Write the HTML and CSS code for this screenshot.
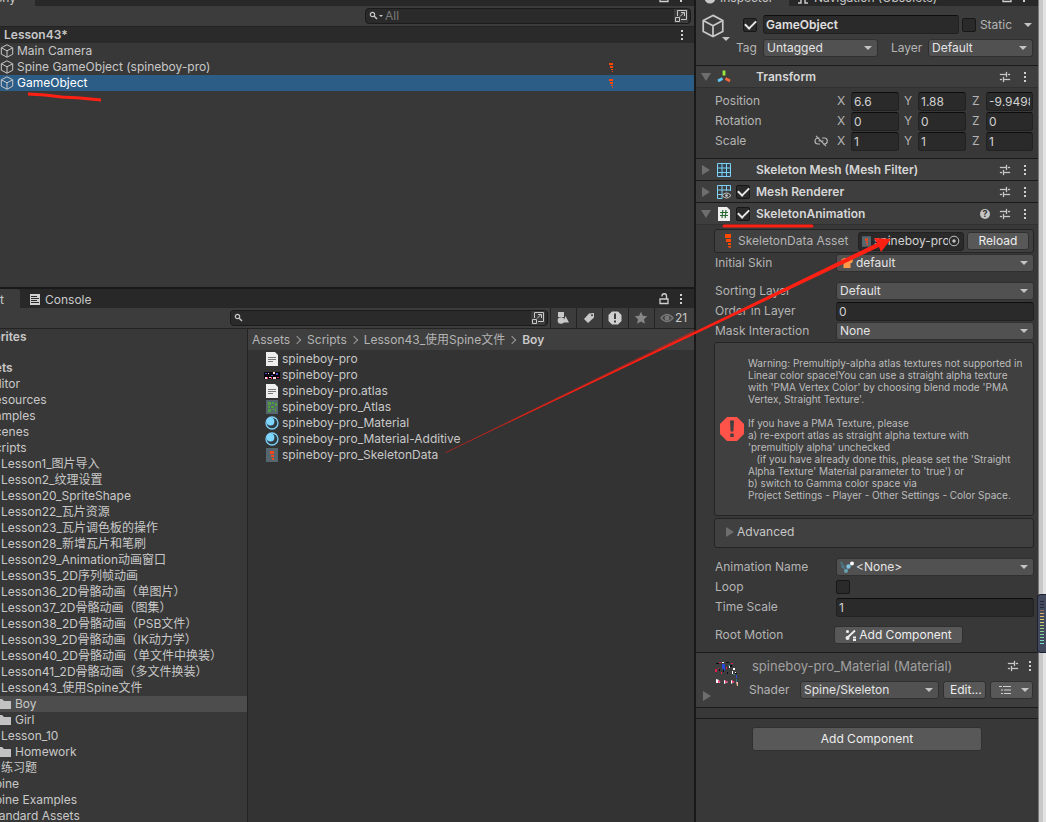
FILE: index.html
```html
<!DOCTYPE html>
<html lang="en">
<head>
    <meta charset="UTF-8">
    <meta name="viewport" content="width=device-width, initial-scale=1.0">
    <title>Lesson43 - Editor</title>
    <link rel="stylesheet" href="styles.css">
</head>
<body>
    <!-- shared icons -->
    <svg class="sprite" aria-hidden="true">
        <symbol id="cube" viewBox="0 0 14 14"><path d="M7 .8 12.700 3.800V10.200L7 13.200 1.300 10.200V3.800ZM1.300 3.800 7 6.800 12.700 3.800M7 6.800V13.200" fill="none" stroke="currentColor" stroke-width="1"/></symbol>
        <symbol id="dots" viewBox="0 0 4 12"><path d="M1 1h2v2H1zM1 5h2v2H1zM1 9h2v2H1z" fill="currentColor"/></symbol>
        <symbol id="preset" viewBox="0 0 12 12"><path d="M1 3h6v1H1zM9 3h2v1H9zM7 1h1v5H7zM1 8h2v1H1zM5 8h6v1H5zM4 6h1v5H4z" fill="#c8c8c8" stroke="#c8c8c8" stroke-width=".3"/></symbol>
        <symbol id="search" viewBox="0 0 10 10"><circle cx="3.500" cy="3.500" r="2.200" fill="none" stroke="currentColor" stroke-width="1.200"/><path d="M5 5l3 3" stroke="currentColor" stroke-width="1.400"/></symbol>
        <symbol id="popout" viewBox="0 0 14 14"><path d="M3.500 7V1.500h9v9H7M1.500 8.500h4v4h-4zM6 7.500l4-4M7 3.500h3.500V7" fill="none" stroke="currentColor" stroke-width="1"/></symbol>
        <symbol id="spine" viewBox="0 0 8 16"><path d="M1 1h6v4H1zM2 6h5v3H2zM4 10h3v2H4zM4 13h3v1l-1 1H5z" fill="#ff4800"/></symbol>
        <symbol id="spine-small" viewBox="0 0 5 11"><path d="M0 1h4v2H0zM1 4h3v2H1zM2 7h2v1H2zM3 9h1v1H3z" fill="#ff4800"/></symbol>
        <symbol id="lock" viewBox="0 0 12 12"><path d="M2 6h8v4.500H2zM4 3.500V3a2 2 0 0 1 4.500 0v3" fill="none" stroke="currentColor" stroke-width="1.300"/></symbol>
        <symbol id="file" viewBox="0 0 14 14"><path d="M1 0h9l3 3v11H1z" fill="#eee"/><path d="M3 5.500h8M3 7.500h8M3 9.500h5" stroke="#777"/></symbol>
        <symbol id="material" viewBox="0 0 14 14"><circle cx="7" cy="7" r="6" fill="#2e3c44" stroke="#7fd0f7" stroke-width="1.300"/><circle cx="5.500" cy="5.500" r="3.900" fill="#7fd6fd"/></symbol>
        <symbol id="folder" viewBox="0 0 14 12"><path d="M0 1h5l2 2h7v8H0z" fill="#c2c2c2"/></symbol>
        <symbol id="bone" viewBox="0 0 12 14"><path d="M0 0h12v14H0z" fill="#56666f"/><path d="M4 3h4v3H4zM5 7h3v2H5zM6 10h2v2H6z" fill="#f2481c"/></symbol>
    </svg>

    <div class="editor">
        <main class="left">
            <section class="hierarchy">
                <div class="tabs clipped-tabs">
                    <div class="tab active hierarchy-tab">Hierarchy</div>
                    <div class="tab-tools">
                        <svg class="i-lock"><use href="#lock"/></svg>
                        <svg class="i-dots"><use href="#dots"/></svg>
                    </div>
                </div>
                <div class="toolbar">
                    <label class="search hierarchy-search">
                        <svg class="i-search"><use href="#search"/></svg>
                        <span class="tiny-caret"></span>
                        <input type="search" placeholder="All" aria-label="Search hierarchy">
                        <svg class="i-popout"><use href="#popout"/></svg>
                    </label>
                </div>
                <div class="scene">
                    <strong>Lesson43*</strong>
                    <svg class="i-dots"><use href="#dots"/></svg>
                </div>
                <ul class="objects">
                    <li><svg class="i-cube"><use href="#cube"/></svg><span>Main Camera</span></li>
                    <li><svg class="i-cube"><use href="#cube"/></svg><span>Spine GameObject (spineboy-pro)</span><svg class="i-spine-small"><use href="#spine-small"/></svg></li>
                    <li class="selected"><svg class="i-cube"><use href="#cube"/></svg><span>GameObject</span><svg class="i-spine-small"><use href="#spine-small"/></svg></li>
                </ul>
            </section>

            <section class="project">
                <div class="tabs">
                    <div class="tab active project-tab">Project</div>
                    <div class="tab console-tab">
                        <svg class="i-console" viewBox="0 0 10 11"><path d="M0 0h10v11H0z" fill="#d2d2d2"/><path d="M1 2.500h6M1 4.500h8M1 6.500h6M1 8.500h8" stroke="#282828"/></svg>
                        Console
                    </div>
                    <div class="tab-tools">
                        <svg class="i-lock"><use href="#lock"/></svg>
                        <svg class="i-dots"><use href="#dots"/></svg>
                    </div>
                </div>
                <div class="toolbar project-toolbar">
                    <label class="search project-search">
                        <svg class="i-search"><use href="#search"/></svg>
                        <input type="search" aria-label="Search project">
                        <svg class="i-popout"><use href="#popout"/></svg>
                    </label>
                    <button class="tool" aria-label="Search by type"><svg class="i-tool" viewBox="0 0 14 14"><path d="M2 1h6v5H2zM9.500 5 13 11.500H7z" fill="#c8c8c8"/><circle cx="5" cy="9.500" r="3.300" fill="#c8c8c8"/></svg></button>
                    <button class="tool" aria-label="Search by label"><svg class="i-tool" viewBox="0 0 14 14"><path d="M7 2.500 12 2v4.500L6 12 2 8z" fill="#c8c8c8"/><circle cx="10" cy="4.300" r="1" fill="#3c3c3c"/></svg></button>
                    <button class="tool" aria-label="Search by import log"><svg class="i-tool" viewBox="0 0 14 14"><path d="M4 .5h6L13.500 4v6L10 13.500H4L.5 10V4z" fill="#d0d0d0"/><path d="M6 2.500h2V8H6zM6 9.500h2v2H6z" fill="#3c3c3c"/></svg></button>
                    <button class="tool" aria-label="Save search"><svg class="i-tool" viewBox="0 0 14 14"><path d="m7 .8 1.900 4 4.300.5-3.200 3 .9 4.400L7 10.500l-3.900 2.200.9-4.400-3.200-3 4.300-.5z" fill="#868686"/></svg></button>
                    <button class="tool hidden-count"><svg class="i-eye" viewBox="0 0 14 10"><path d="M1 5q6-7 12 0-6 7-12 0z" fill="none" stroke="#777" stroke-width="1.300"/><circle cx="7" cy="5" r="2.500" fill="#777"/></svg>21</button>
                </div>
                <div class="browser">
                    <ul class="tree">
                        <li class="root favorites">Favorites</li>
                        <li class="root">Assets</li>
                        <li>Editor</li>
                        <li>Resources</li>
                        <li>Samples</li>
                        <li>Scenes</li>
                        <li>Scripts</li>
                        <li class="level2">Lesson1_图片导入</li>
                        <li class="level2">Lesson2_纹理设置</li>
                        <li class="level2">Lesson20_SpriteShape</li>
                        <li class="level2">Lesson22_瓦片资源</li>
                        <li class="level2">Lesson23_瓦片调色板的操作</li>
                        <li class="level2">Lesson28_新增瓦片和笔刷</li>
                        <li class="level2">Lesson29_Animation动画窗口</li>
                        <li class="level2">Lesson35_2D序列帧动画</li>
                        <li class="level2">Lesson36_2D骨骼动画（单图片）</li>
                        <li class="level2">Lesson37_2D骨骼动画（图集）</li>
                        <li class="level2">Lesson38_2D骨骼动画（PSB文件）</li>
                        <li class="level2">Lesson39_2D骨骼动画（IK动力学）</li>
                        <li class="level2">Lesson40_2D骨骼动画（单文件中换装）</li>
                        <li class="level2">Lesson41_2D骨骼动画（多文件换装）</li>
                        <li class="level2">Lesson43_使用Spine文件</li>
                        <li class="level3 current"><svg class="i-folder"><use href="#folder"/></svg>Boy</li>
                        <li class="level3"><svg class="i-folder"><use href="#folder"/></svg>Girl</li>
                        <li class="level2">Lesson_10</li>
                        <li class="level3"><svg class="i-folder"><use href="#folder"/></svg>Homework</li>
                        <li class="level2">练习题</li>
                        <li>Spine</li>
                        <li>Spine Examples</li>
                        <li>Standard Assets</li>
                    </ul>
                    <div class="files">
                        <nav class="crumbs">
                            <a href="#">Assets</a><i></i><a href="#">Scripts</a><i></i><a href="#">Lesson43_使用Spine文件</a><i></i><strong>Boy</strong>
                        </nav>
                        <ul class="file-list">
                            <li><svg class="i-file"><use href="#file"/></svg>spineboy-pro</li>
                            <li><svg class="i-file i-strip" viewBox="0 0 16 7"><path d="M0 0h16v7H0z" fill="#08060c"/><path d="M1 1h2v1H1zM7 3h2v1H7zM12 1h2v2h-2z" fill="#4650c8"/><path d="M4 1h1v1H4zM9 0h2v2H9zM1 5h2v2H1zM5 5h2v1H5zM9 5h3v2H9z" fill="#ffd7d7"/><path d="M3 5h1v2H3zM7 5h1v2H7zM13 5h2v1h-2z" fill="#e8306a"/></svg>spineboy-pro</li>
                            <li><svg class="i-file"><use href="#file"/></svg>spineboy-pro.atlas</li>
                            <li><svg class="i-file" viewBox="0 0 14 14"><path d="M1 0h12v14H1z" fill="#56666f"/><path d="M3 2h3v3H3zM7 2h2v2H7zM10 3h2v3h-2zM3 6h2v2H3zM6 6h3v2H6zM3 9h3v3H3zM7 9h2v1H7zM10 8h1v4h-1z" fill="#4fa03c"/></svg>spineboy-pro_Atlas</li>
                            <li><svg class="i-file"><use href="#material"/></svg>spineboy-pro_Material</li>
                            <li><svg class="i-file"><use href="#material"/></svg>spineboy-pro_Material-Additive</li>
                            <li><svg class="i-file"><use href="#bone"/></svg>spineboy-pro_SkeletonData</li>
                        </ul>
                    </div>
                </div>
            </section>
        </main>

        <aside class="inspector">
            <div class="tabs clipped-tabs">
                <div class="tab active inspector-tab"><svg class="i-info" viewBox="0 0 12 12"><circle cx="6" cy="6" r="5.500" fill="#c8c8c8"/></svg>Inspector</div>
                <div class="tab nav-tab"><svg class="i-info" viewBox="0 0 12 12"><path d="M1 1l4 4M11 1 7 5M1 11h3V7M11 11H8V7" fill="none" stroke="#c8c8c8" stroke-width="1.500"/></svg>Navigation (Obsolete)</div>
                <div class="tab-tools">
                    <svg class="i-lock"><use href="#lock"/></svg>
                    <svg class="i-dots"><use href="#dots"/></svg>
                </div>
            </div>

            <header class="object-header">
                <div class="object-icon"><svg class="i-big-cube"><use href="#cube"/></svg><span class="caret"></span></div>
                <div class="object-fields">
                    <div class="object-row">
                        <input class="check" type="checkbox" aria-label="Active" checked>
                        <input class="field object-name" type="text" value="GameObject" aria-label="Name">
                        <input class="check" type="checkbox" id="static">
                        <label for="static" class="static-label">Static</label>
                        <span class="caret"></span>
                    </div>
                    <div class="object-row tag-row">
                        <label for="tag">Tag</label>
                        <span class="select tag-select"><select id="tag"><option>Untagged</option></select></span>
                        <label for="layer" class="layer-label">Layer</label>
                        <span class="select layer-select"><select id="layer"><option>Default</option></select></span>
                    </div>
                </div>
            </header>

            <section class="component">
                <h2>
                    <span class="fold open"></span>
                    <svg class="i-comp" viewBox="0 0 14 14"><path d="M7 .5v5" stroke="#9be83c" stroke-width="2.800"/><path d="M5.500 8.500 1 11" stroke="#5fc8f5" stroke-width="2.800"/><path d="M8.500 8.500 13 11" stroke="#f5683c" stroke-width="2.800"/></svg>
                    <span class="title">Transform</span>
                    <svg class="i-preset"><use href="#preset"/></svg>
                    <svg class="i-dots"><use href="#dots"/></svg>
                </h2>
                <div class="props transform-props">
                    <div class="vector"><span class="name">Position</span>
                        <label for="px">X</label><input class="field" id="px" type="text" value="6.6">
                        <label for="py">Y</label><input class="field" id="py" type="text" value="1.88">
                        <label for="pz">Z</label><input class="field" id="pz" type="text" value="-9.949829">
                    </div>
                    <div class="vector"><span class="name">Rotation</span>
                        <label for="rx">X</label><input class="field" id="rx" type="text" value="0">
                        <label for="ry">Y</label><input class="field" id="ry" type="text" value="0">
                        <label for="rz">Z</label><input class="field" id="rz" type="text" value="0">
                    </div>
                    <div class="vector"><span class="name">Scale
                        <svg class="i-link" viewBox="0 0 14 12"><path d="M5.500 3H4a3 3 0 0 0 0 6h2M8 3h2a3 3 0 0 1 .5 6H9M4.500 6h5M2 .8l10 10.400" fill="none" stroke="#b4b4b4" stroke-width="1.200"/></svg></span>
                        <label for="sx">X</label><input class="field" id="sx" type="text" value="1">
                        <label for="sy">Y</label><input class="field" id="sy" type="text" value="1">
                        <label for="sz">Z</label><input class="field" id="sz" type="text" value="1">
                    </div>
                </div>
            </section>

            <section class="component">
                <h2>
                    <span class="fold"></span>
                    <svg class="i-comp" viewBox="0 0 14 14"><path d="M.5.5h13v13H.5zM5 .5v13M9.500.5v13M.5 5h13M.5 9.500h13" fill="#31424c" stroke="#7fd0f7"/></svg>
                    <span class="title">Skeleton Mesh (Mesh Filter)</span>
                    <svg class="i-preset"><use href="#preset"/></svg>
                    <svg class="i-dots"><use href="#dots"/></svg>
                </h2>
            </section>

            <section class="component">
                <h2>
                    <span class="fold"></span>
                    <svg class="i-comp" viewBox="0 0 14 14"><path d="M5 13.500H.5V.5h13V6M5 .5v13M9.500.5V6M.5 5h13M.5 9.500H5" fill="none" stroke="#7fd0f7"/><path d="M5 10.500q4.500-5 9 0-4.500 5-9 0z" fill="#3e3e3e" stroke="#c8c8c8"/><circle cx="9.500" cy="10.500" r="1.300" fill="#c8c8c8"/></svg>
                    <input class="check" type="checkbox" aria-label="Mesh Renderer enabled" checked>
                    <span class="title">Mesh Renderer</span>
                    <svg class="i-preset"><use href="#preset"/></svg>
                    <svg class="i-dots"><use href="#dots"/></svg>
                </h2>
            </section>

            <section class="component">
                <h2>
                    <span class="fold open"></span>
                    <svg class="i-comp" viewBox="0 0 14 14"><path d="M1 0h9l3 3v11H1z" fill="#f0f0f0"/><path d="M5.800 3 5 11M9 3l-.8 8M3 5.500h8M3 8.500h8" stroke="#2a6b35" stroke-width="1.200"/></svg>
                    <input class="check" type="checkbox" aria-label="SkeletonAnimation enabled" checked>
                    <span class="title">SkeletonAnimation</span>
                    <span class="help">?</span>
                    <svg class="i-preset"><use href="#preset"/></svg>
                    <svg class="i-dots"><use href="#dots"/></svg>
                </h2>
                <div class="props skeleton-props">
                    <div class="box asset-box">
                        <svg class="i-spine"><use href="#spine"/></svg>
                        <label for="asset">SkeletonData Asset</label>
                        <span class="object-field">
                            <svg class="i-bone"><use href="#bone"/></svg>
                            <input id="asset" type="text" value="spineboy-pro_SkeletonData" readonly>
                            <svg class="i-picker" viewBox="0 0 12 12"><circle cx="6" cy="6" r="4.800" fill="none" stroke="#c4c4c4"/><circle cx="6" cy="6" r="1.700" fill="#c4c4c4"/></svg>
                        </span>
                        <button class="btn reload">Reload</button>
                    </div>
                    <div class="prop"><label for="skin">Initial Skin</label>
                        <span class="select with-icon"><svg class="i-option" viewBox="0 0 14 12"><path d="M1 3 4 1h2q1.500 1.500 3 0h2l2 2-1 3h-1.500v5h-7V6H2z" fill="#ff9a4a"/></svg><select id="skin"><option>default</option></select></span></div>
                    <div class="prop spaced"><label for="sorting">Sorting Layer</label>
                        <span class="select"><select id="sorting"><option>Default</option></select></span></div>
                    <div class="prop"><label for="order">Order in Layer</label><input class="field" id="order" type="text" value="0"></div>
                    <div class="prop"><label for="mask">Mask Interaction</label>
                        <span class="select"><select id="mask"><option>None</option></select></span></div>
                    <div class="box warning">
                        <svg class="i-error" viewBox="0 0 24 24"><path d="M7 0h10l7 7v10l-7 7H7l-7-7V7z" fill="#ff534a"/><path d="M10 3.500h4l-.6 11h-2.800zM10.300 16.500h3.400v3.500h-3.400z" fill="#404040"/></svg>
                        <p>Warning: Premultiply-alpha atlas textures not supported in
Linear color space!You can use a straight alpha texture
with 'PMA Vertex Color' by choosing blend mode 'PMA
Vertex, Straight Texture'.

If you have a PMA Texture, please
a) re-export atlas as straight alpha texture with
'premultiply alpha' unchecked
   (if you have already done this, please set the 'Straight
Alpha Texture' Material parameter to 'true') or
b) switch to Gamma color space via
Project Settings - Player - Other Settings - Color Space.</p>
                    </div>
                    <div class="box advanced"><span class="fold"></span>Advanced</div>
                    <div class="prop"><label for="anim">Animation Name</label>
                        <span class="select with-icon"><svg class="i-option" viewBox="0 0 14 12"><path d="M1.500 2 3 6l3 4 3-5 3.500-3" fill="none" stroke="#4d7482" stroke-width="1.500"/><circle cx="1.500" cy="2" r="1.300" fill="#4d7482"/><circle cx="3" cy="5.500" r="2" fill="#4d7482"/><circle cx="6" cy="10" r="2" fill="#6a9fb2"/><circle cx="8.500" cy="5.500" r="2.200" fill="#7fc4dc"/><circle cx="12" cy="2.500" r="2" fill="#fff"/></svg><select id="anim"><option>&lt;None&gt;</option></select></span></div>
                    <div class="prop"><label for="loop">Loop</label><input class="check" type="checkbox" id="loop"></div>
                    <div class="prop"><label for="time">Time Scale</label><input class="field" id="time" type="text" value="1"></div>
                    <div class="prop root-motion"><span>Root Motion</span>
                        <button class="btn"><svg class="i-root" viewBox="0 0 12 12"><path d="M2 9 10 1.500M8 8.500h3M8 11h3" stroke="#eee" stroke-width="1.800"/><circle cx="2.500" cy="2.500" r="1.500" fill="#eee"/><circle cx="2.500" cy="9" r="2" fill="#eee"/></svg>Add Component</button></div>
                </div>
            </section>

            <section class="material">
                <div class="thumb">
                    <svg class="i-thumb" viewBox="0 0 26 28"><path d="M2 2h3v1H2zM12 1h3v1h-3zM5 8h1v2H5zM9 9h1v2H9zM16 4h2v2h-2zM21 12h2v1h-2zM13 11h1v2h-1z" fill="#0a0a10"/><path d="M8 3h3v5H8zM10 8h1v2h-1zM22 14h1v3h-1z" fill="#2849d8"/><path d="M5 1h2v1H5zM1 8h2v3H1zM4 7h1v1H4zM17 2h2v1h-2zM7 11h1v2H7zM12 6h1v2h-1z" fill="#e81c4c"/><path d="M8 1h2v1H8zM19 7h2v2h-2zM18 10h1v3h-1zM21 11h1v1h-1zM15 5h1v2h-1z" fill="#fff"/><path d="M14 4h2v1h-2zM19 13h2v1h-2zM22 18h1v3h-1z" fill="#2b7a8c"/><path d="M2 18l3 1 1 3H2zM10 19l4 2-4 2zM17 19l3 2-3 2z" fill="#fff"/><path d="M4 19l3 2-3 1zM11 19l3 2-3 1zM18 19l3 2-3 1z" fill="#ee3a78"/><path d="M22 21h2v4h-1z" fill="#f0b8a0"/></svg>
                    <span class="fold"></span>
                </div>
                <div class="material-main">
                    <div class="material-title"><span>spineboy-pro_Material (Material)</span>
                        <svg class="i-preset"><use href="#preset"/></svg>
                        <svg class="i-dots"><use href="#dots"/></svg>
                    </div>
                    <div class="shader-row">
                        <label for="shader">Shader</label>
                        <span class="select"><select id="shader"><option>Spine/Skeleton</option></select></span>
                        <button class="btn edit">Edit...</button>
                        <button class="btn list-btn" aria-label="Shader list"><svg class="i-list" viewBox="0 0 12 10"><path d="M0 1.500h3M4 1.500h8M2 5h2M5 5h7M2 8.500h2M5 8.500h7" stroke="#d0d0d0" stroke-width="1.200"/></svg><span class="caret"></span></button>
                    </div>
                </div>
            </section>
            <div class="footer-bar"></div>
            <button class="btn add-component">Add Component</button>
        </aside>

        <div class="edge"></div>
    </div>

    <!-- floating meter docked on the right edge -->
    <div class="meter"><span></span></div>

    <!-- red pen marks drawn over the editor -->
    <svg class="marks" viewBox="0 0 1046 822" aria-hidden="true">
        <path d="M28 94 45 95 62 97 80 98 101 100" fill="none" stroke="#ff2014" stroke-width="3"/>
        <path d="M724 226H812" stroke="#ff2014" stroke-width="3" stroke-linecap="round"/>
        <path d="M445 453 696 330" stroke="#ff2014" stroke-width="1" stroke-opacity=".5"/>
        <path d="M447 452 877 243 874 238 891 239 881 252 879 247Z" fill="#ff2014"/>
    </svg>
</body>
</html>
```
FILE: styles.css
```css
* {
    box-sizing: border-box;
}

body {
    margin: 0;
    height: 100vh;
    overflow: hidden;
    background: #383838;
    color: #c8c8c8;
    font: 12px/16px Inter, "Noto Sans CJK SC", sans-serif;
}

ul, h2, p {
    margin: 0;
    padding: 0;
    list-style: none;
}

input, select, button {
    font: inherit;
    color: inherit;
    margin: 0;
    outline: none;
}

svg {
    display: block;
    flex: none;
}

.sprite {
    position: absolute;
    width: 0;
    height: 0;
}

.editor {
    display: flex;
    height: 100%;
}

.left {
    flex: 1;
    min-width: 0;
    display: flex;
    flex-direction: column;
    border-right: 2px solid #191919;
}

/* tabs */
.tabs {
    display: flex;
    flex: none;
    height: 19px;
    background: #282828;
    overflow: hidden;
}

.clipped-tabs {
    margin-top: -13px;
}

.tab {
    display: flex;
    align-items: center;
    white-space: nowrap;
    padding-top: 2px;
}

.tab.active {
    background: #3c3c3c;
}

.hierarchy-tab {
    width: 35px;
    justify-content: flex-end;
    padding-right: 19px;
}

.project-tab {
    width: 20px;
    justify-content: flex-end;
    padding-right: 16px;
    border-top-right-radius: 3px;
}

.console-tab {
    padding-left: 10px;
    gap: 5px;
}

.inspector-tab {
    width: 93px;
    padding-left: 8px;
    gap: 4px;
}

.nav-tab {
    padding-left: 8px;
    gap: 5px;
}

.tab-tools {
    margin-left: auto;
    display: flex;
    align-items: center;
    gap: 9px;
    padding-right: 11px;
}

/* icon sizes */
.i-dots { width: 4px; height: 12px; color: #d0d0d0; }
.i-lock { width: 12px; height: 12px; color: #d0d0d0; }
.i-search { width: 10px; height: 10px; }
.i-popout { width: 14px; height: 14px; }
.i-cube { width: 14px; height: 14px; }
.i-big-cube { width: 24px; height: 24px; }
.i-spine-small { width: 5px; height: 11px; }
.i-console { width: 10px; height: 11px; }
.i-tool { width: 14px; height: 14px; }
.i-eye { width: 14px; height: 10px; }
.i-folder { width: 14px; height: 12px; }
.i-file { width: 14px; height: 14px; }
.i-info { width: 12px; height: 12px; }
.i-comp { width: 14px; height: 14px; }
.i-preset { width: 12px; height: 12px; }
.i-link { width: 14px; height: 12px; }
.i-spine { width: 8px; height: 16px; }
.i-bone { width: 9px; height: 11px; }
.i-picker { width: 12px; height: 12px; }
.i-option { width: 14px; height: 12px; }
.i-error { width: 24px; height: 24px; }
.i-root { width: 12px; height: 12px; }
.i-thumb { width: 26px; height: 28px; }
.i-list { width: 12px; height: 10px; }

/* toolbars */
.toolbar {
    flex: none;
    display: flex;
    justify-content: flex-end;
    height: 21px;
    background: #3c3c3c;
    border-bottom: 1px solid #232323;
}

.search {
    display: flex;
    align-items: center;
    height: 16px;
    margin-top: 2px;
    padding: 0 2px 0 3px;
    background: #2a2a2a;
    border: 1px solid #1b1b1b;
    border-radius: 4px;
}

.search input {
    flex: 1;
    min-width: 0;
    border: 0;
    padding: 0;
    background: none;
}

.search input::placeholder {
    color: #7b7b7b;
    opacity: 1;
}

.search .i-popout {
    width: 14px;
    height: 14px;
    background: #3c3c3c;
}

.hierarchy-search {
    width: 326px;
    margin-right: 3px;
}

.tiny-caret {
    margin-right: 2px;
    border: 2px solid transparent;
    border-top-color: #c8c8c8;
    border-bottom: 0;
}

.project-search {
    width: 318px;
    margin-right: 2px;
}

.tool {
    display: flex;
    align-items: center;
    justify-content: center;
    width: 26px;
    padding: 0 2px 0 0;
    background: none;
    border: 0;
    border-left: 1px solid #232323;
}

.hidden-count {
    width: 40px;
    gap: 1px;
}

/* hierarchy */
.hierarchy {
    flex: none;
    height: 287px;
    overflow: hidden;
}

.scene {
    display: flex;
    align-items: center;
    justify-content: space-between;
    height: 16px;
    padding: 0 10px 0 4px;
    background: #2a2a2a;
}

.scene strong {
    font-weight: 600;
}

.objects li {
    display: flex;
    align-items: center;
    height: 16px;
}

.objects span {
    flex: 1;
    margin-left: 3px;
}

.objects .i-spine-small {
    margin-right: 80px;
}

.objects .selected {
    background: #2c5d87;
    color: #fff;
}

.selected .i-cube {
    color: #c8c8c8;
}

/* project */
.project {
    flex: 1;
    min-height: 0;
    display: flex;
    flex-direction: column;
    border-top: 2px solid #191919;
}

.browser {
    flex: 1;
    min-height: 0;
    display: flex;
}

.tree {
    width: 248px;
    flex: none;
    overflow: hidden;
    border-right: 1px solid #232323;
}

.tree li {
    display: flex;
    align-items: center;
    height: 16px;
    white-space: nowrap;
    text-indent: -13px;
}

.tree .root {
    font-weight: 600;
    text-indent: -27px;
}

.tree .favorites {
    margin-bottom: 15px;
}

.tree .level2 {
    text-indent: 1px;
}

.tree .level3 {
    text-indent: 0;
    gap: 4px;
}

.tree .i-folder {
    margin-left: -3px;
}

.tree .current {
    background: #4d4d4d;
}

.files {
    flex: 1;
    min-width: 0;
    background: #333;
}

.crumbs {
    display: flex;
    align-items: center;
    height: 21px;
    padding-left: 4px;
    background: #3f3f3f;
}

.crumbs a {
    color: #b4b4b4;
    text-decoration: none;
}

.crumbs strong {
    font-weight: 600;
}

.crumbs i {
    width: 6px;
    height: 6px;
    margin: 0 7px 0 4px;
    border: solid #9a9a9a;
    border-width: 1px 1px 0 0;
    transform: rotate(45deg);
}

.file-list {
    padding-top: 1px;
}

.file-list li {
    display: flex;
    align-items: center;
    gap: 3px;
    height: 16px;
    padding-left: 17px;
}

.file-list .i-strip {
    width: 16px;
    height: 7px;
    margin: 0 -1px;
}

/* inspector */
.inspector {
    width: 342px;
    flex: none;
    overflow: hidden;
}

.inspector .tab-tools {
    padding-right: 12px;
}

.field {
    width: 100%;
    min-width: 0;
    height: 19px;
    padding: 0 2px;
    background: #2a2a2a;
    border: 1px solid #212121;
    border-top-color: #0d0d0d;
    border-radius: 3px;
    color: #d2d2d2;
}

.check {
    appearance: none;
    flex: none;
    display: grid;
    place-items: center;
    width: 14px;
    height: 14px;
    background: #2a2a2a;
    border: 1px solid #171717;
    border-radius: 2px;
}

.check:checked::before {
    content: "";
    width: 9px;
    height: 5px;
    margin-bottom: 3px;
    border: solid #e8e8e8;
    border-width: 0 0 2px 2px;
    transform: rotate(-45deg);
}

.select {
    position: relative;
    display: block;
    width: 100%;
    height: 18px;
}

.select select {
    appearance: none;
    display: block;
    width: 100%;
    height: 100%;
    padding: 0 16px 1px 3px;
    background: #515151;
    border: 1px solid #303030;
    border-radius: 3px;
    color: #e4e4e4;
}

.select::after {
    content: "";
    position: absolute;
    right: 6px;
    top: 7px;
    border: 4px solid transparent;
    border-top-color: #c4c4c4;
    border-bottom: 0;
}

.with-icon select {
    padding-left: 19px;
}

.with-icon .i-option {
    position: absolute;
    left: 4px;
    top: 3px;
}

.caret {
    border: 4px solid transparent;
    border-top-color: #c4c4c4;
    border-bottom: 0;
}

.btn {
    height: 18px;
    padding: 0 6px;
    background: #585858;
    border: 1px solid #303030;
    border-radius: 3px;
    color: #eee;
    line-height: 16px;
}

.fold {
    width: 0;
    height: 0;
    border: 5px solid transparent;
    border-left: 8px solid #6e6e6e;
    border-right: 0;
}

.fold.open {
    border: 5px solid transparent;
    border-top: 8px solid #6e6e6e;
    border-bottom: 0;
}

.object-header {
    display: flex;
    height: 59px;
    padding: 8px 5px 0 5px;
    background: #3c3c3c;
}

.object-icon {
    position: relative;
    width: 42px;
    flex: none;
}

.object-icon .caret {
    position: absolute;
    left: 21px;
    top: 23px;
}

.object-fields {
    flex: 1;
}

.object-row {
    display: flex;
    align-items: center;
    height: 21px;
}

.object-name {
    margin: 0 3px 0 6px;
    font-weight: 600;
    color: #e0e0e0;
}

.static-label {
    margin: 0 12px 0 4px;
    color: #b4b4b4;
}

.object-row > .caret {
    margin-right: 1px;
}

.tag-row {
    height: 26px;
    color: #b4b4b4;
}

.tag-row label {
    width: 27px;
    flex: none;
    margin-left: -7px;
}

.tag-row .layer-label {
    width: 37px;
    margin-left: 13px;
}

.tag-select {
    width: 115px;
}

.layer-select {
    flex: 1;
    width: auto;
}

.component {
    border-top: 1px solid #1a1a1a;
}

.component h2 {
    display: flex;
    align-items: center;
    height: 21px;
    padding: 0 11px 0 5px;
    background: #3e3e3e;
    font-size: 12px;
    font-weight: 600;
    color: #d6d6d6;
}

.component h2 .fold {
    margin-right: 7px;
    margin-left: 1px;
}

.component h2 .fold.open {
    margin-right: 6px;
    margin-left: 0;
}

.component h2 .i-comp {
    margin-right: 5px;
}

.component h2 .title {
    flex: 1;
    margin-left: 6px;
}

.component h2 .i-comp + .title {
    margin-left: 20px;
}

.component h2 .i-dots {
    margin-left: 12px;
}

.help {
    display: grid;
    place-items: center;
    width: 10px;
    height: 10px;
    margin-right: 9px;
    border-radius: 5px;
    background: #c4c4c4;
    color: #333;
    font-size: 9px;
    line-height: 10px;
    font-weight: 700;
}

.props {
    padding: 4px 4px 0 18px;
    color: #b4b4b4;
    border-top: 1px solid #303030;
}

.transform-props {
    height: 71px;
    padding-top: 3px;
}

.vector {
    display: grid;
    grid-template-columns: 123px 14px 48px 4px 15px 48px 5px 15px 1fr;
    align-items: center;
    height: 20px;
    padding-left: 1px;
}

.vector .name {
    display: flex;
    align-items: center;
    justify-content: space-between;
    padding-right: 10px;
}

.vector label:nth-of-type(1) {
    margin-left: -1px;
}

.vector label:nth-of-type(2) {
    grid-column: 5;
}

.vector label:nth-of-type(3) {
    grid-column: 8;
}

.vector .field {
    margin-left: -1px;
}

.prop {
    display: grid;
    grid-template-columns: 121px 1fr;
    align-items: center;
    height: 20px;
    padding-left: 1px;
}

.prop.spaced {
    margin-top: 8px;
}

.box {
    background: #404040;
    border: 1px solid #242424;
    border-radius: 3px;
}

.skeleton-props {
    height: 428px;
}

.asset-box {
    display: flex;
    align-items: center;
    height: 24px;
    padding: 0 4px 0 9px;
}

.asset-box label {
    width: 126px;
    flex: none;
    padding-left: 6px;
    white-space: nowrap;
}

.object-field {
    display: flex;
    align-items: center;
    flex: 1;
    min-width: 0;
    height: 19px;
    padding: 0 3px;
    background: #2a2a2a;
    border: 1px solid #212121;
    border-radius: 3px;
}

.object-field input {
    flex: 1;
    min-width: 0;
    padding: 0 0 0 3px;
    border: 0;
    background: none;
    color: #d2d2d2;
}

.reload {
    width: 62px;
    margin-left: 3px;
}

.warning {
    display: flex;
    align-items: center;
    gap: 4px;
    height: 174px;
    margin-top: 1px;
    padding-left: 5px;
}

.warning p {
    font-size: 10px;
    line-height: 12px;
    white-space: pre;
    color: #bdbdbd;
}

.advanced {
    display: flex;
    align-items: center;
    gap: 3px;
    height: 30px;
    margin: 2px 0 9px;
    padding: 0 11px 2px;
    color: #c8c8c8;
}

.root-motion {
    margin-top: 8px;
}

.root-motion .btn {
    display: flex;
    align-items: center;
    justify-content: center;
    gap: 2px;
    width: 129px;
    margin-left: -2px;
}

.material {
    display: flex;
    height: 55px;
    padding: 5px 5px 0 6px;
    background: #3e3e3e;
    border-top: 1px solid #1a1a1a;
}

.thumb {
    width: 50px;
    flex: none;
}

.thumb .i-thumb {
    margin: 3px 0 0 12px;
}

.thumb .fold {
    display: block;
    margin: 2px 0 0 1px;
}

.material-main {
    flex: 1;
    min-width: 0;
}

.material-title {
    display: flex;
    align-items: center;
    color: #a0a0a0;
    font-size: 13px;
}

.material-title span {
    flex: 1;
}

.material-title .i-dots {
    margin: 0 1px 0 9px;
}

.shader-row {
    display: flex;
    align-items: center;
    gap: 4px;
    margin-top: 7px;
    margin-left: -3px;
    color: #b4b4b4;
}

.shader-row label {
    width: 47px;
    flex: none;
}

.shader-row .select {
    flex: 1;
}

.edit {
    width: 43px;
}

.list-btn {
    display: flex;
    align-items: center;
    gap: 10px;
    width: 43px;
    padding: 0 8px;
}

.footer-bar {
    height: 12px;
    border: solid #1a1a1a;
    border-width: 1px 0;
}

.add-component {
    display: block;
    width: 230px;
    height: 24px;
    margin: 8px auto 0;
}

/* strip of the window behind */
.edge {
    width: 8px;
    flex: none;
    background: linear-gradient(90deg, #777 0 1px, #c8c8c8 1px 5px, #e2e2e2 5px);
}

.meter {
    position: absolute;
    right: 0;
    top: 594px;
    width: 9px;
    height: 59px;
    padding: 6px 2px 6px 2px;
    background: #444a5e;
    border: 1px solid #1c2233;
    border-right: 0;
    border-radius: 4px 0 0 4px;
}

.meter span {
    display: block;
    height: 100%;
    background: repeating-linear-gradient(#0000 0 1px, #444a5e 1px 3px),
        linear-gradient(#23283a 20%, #e0a060 22%, #d8d070 45%, #8ad080 65%, #6adfd8);
}

.marks {
    position: absolute;
    left: 0;
    top: 0;
    width: 1046px;
    height: 822px;
    pointer-events: none;
}
```
